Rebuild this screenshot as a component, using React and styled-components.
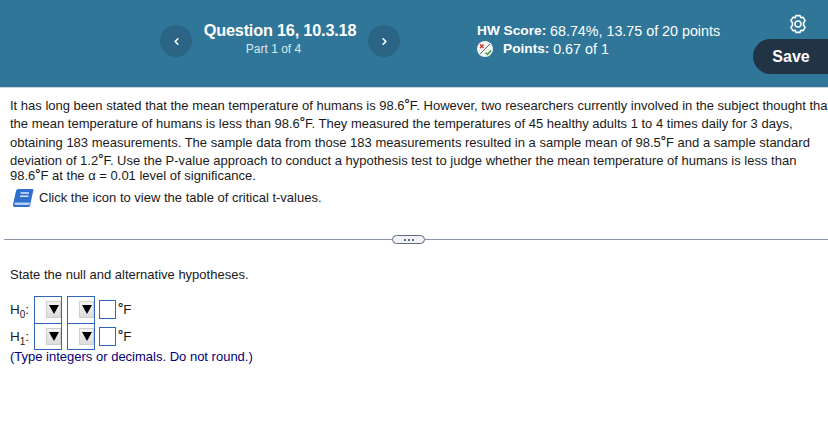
import React from "react";
import styled, { createGlobalStyle } from "styled-components";
import { ChevronLeft, ChevronRight } from "lucide-react";

const GlobalStyle = createGlobalStyle`
  html, body {
    margin: 0;
    padding: 0;
    background: #fff;
    overflow: hidden;
  }
  body {
    font-family: "Liberation Sans", Arial, sans-serif;
    color: #1a1a1a;
  }
`;

const Page = styled.div`
  width: 828px;
  height: 432px;
  overflow: hidden;
`;

const Header = styled.header`
  display: flex;
  height: 88px;
  box-sizing: border-box;
  padding: 14px 0 0 160px;
  background-color: #2f7699;
  border-bottom: 1px solid #c9d3da;
  color: #fff;
`;

const NavButton = styled.button`
  display: flex;
  align-items: center;
  justify-content: center;
  flex: none;
  width: 32px;
  height: 32px;
  margin-top: 11px;
  padding: 0;
  border: 0;
  border-radius: 50%;
  background-color: #2b6484;
  color: #fff;
`;

const QuestionInfo = styled.div`
  width: 176px;
  padding-top: 6px;
  text-align: center;
`;

const QuestionTitle = styled.div`
  font-size: 16.3px;
  font-weight: 700;
  line-height: 20px;
  letter-spacing: -0.2px;
`;

const PartLabel = styled.div`
  margin: 2px 13px 0 0;
  font-size: 12px;
  line-height: 15px;
  color: #dce8ee;
`;

const ScoreInfo = styled.div`
  width: 276px;
  margin-left: 77px;
  padding-top: 8px;
  font-size: 14.3px;
  line-height: 18px;

  b {
    font-size: 13.7px;
  }
`;

const ScoreRow = styled.div`
  display: flex;
  align-items: center;
  white-space: pre;
`;

const PointsIcon = styled.svg`
  width: 16px;
  height: 16px;
  margin-right: 10px;
`;

const Actions = styled.div`
  display: flex;
  flex-direction: column;
  width: 75px;
`;

const GearIcon = styled.svg`
  width: 20px;
  height: 20px;
  margin: 0 0 5px 35px;
`;

const SaveButton = styled.button`
  width: 75px;
  height: 35px;
  padding: 1px 0 0 1px;
  border: 0;
  border-radius: 18px 0 0 18px;
  background-color: #203446;
  color: #fff;
  font-family: inherit;
  font-size: 16px;
  font-weight: 700;
`;

const Question = styled.section`
  padding: 9px 0 0 10px;
  font-size: 13px;
  white-space: nowrap;
`;

const TextLine = styled.div`
  height: ${(p) => p.$height || 18.3}px;
  line-height: 18.3px;
`;

const Sup = styled.span`
  position: relative;
  top: -2px;
  font-size: 13px;
  font-weight: 700;
`;

const IconLine = styled.div`
  display: flex;
  align-items: center;
  gap: 5px;
  height: 20px;
  margin: 2px 0 0 2px;
`;

const Divider = styled.div`
  display: flex;
  align-items: center;
  height: 12px;
  margin: 26px 0 0 4px;
`;

const DividerLine = styled.div`
  flex: ${(p) => (p.$fixed ? "none" : 1)};
  width: ${(p) => (p.$fixed ? "388px" : "auto")};
  height: 1px;
  background-color: #8a94a3;
`;

const Pill = styled.div`
  display: flex;
  align-items: center;
  justify-content: center;
  gap: 2px;
  box-sizing: border-box;
  width: 33px;
  height: 9px;
  border: 1px solid #5f6b7c;
  border-radius: 5px;
  background-color: #f1f3f6;
`;

const Dot = styled.span`
  width: 2px;
  height: 2px;
  background-color: #5f6b7c;
`;

const Answer = styled.section`
  padding: 21px 0 0 10px;
  font-size: 13px;
`;

const Prompt = styled.div`
  line-height: 16px;
  margin-bottom: 14px;
`;

const HypothesisRow = styled.div`
  display: flex;
  align-items: center;
  height: 26.5px;
`;

const HLabel = styled.div`
  width: 24px;
  font-size: 13.5px;

  sub {
    font-size: 10px;
    line-height: 0;
  }
`;

const SelectBox = styled.div`
  display: flex;
  justify-content: flex-end;
  align-items: center;
  flex: none;
  box-sizing: border-box;
  width: 28px;
  height: 27.5px;
  margin-right: 5px;
  border: 1.3px solid #3366bb;
`;

const SelectArrow = styled.div`
  display: flex;
  align-items: center;
  justify-content: center;
  box-sizing: border-box;
  width: 15px;
  height: 17px;
  background: linear-gradient(#f4f4f4, #dcdcdc);
  border: 1px solid #cfcfcf;

  &::after {
    content: "";
    border-left: 5px solid transparent;
    border-right: 5px solid transparent;
    border-top: 9px solid #000;
  }
`;

const NumberBox = styled.div`
  flex: none;
  box-sizing: border-box;
  width: 17px;
  height: 19px;
  margin-left: -1px;
  border: 1.2px solid #3366bb;
`;

const Unit = styled.div`
  margin-left: 2px;
  font-size: 13.5px;
`;

const Hint = styled.div`
  margin-top: -1px;
  line-height: 15px;
  color: #00007a;
`;

const BookIcon = () => (
  <svg width="22" height="20" viewBox="0 0 22 20">
    <path d="M6.5 1h14c.6 0 1 .5.9 1.1L18 17.8c-.1.7-.6 1.2-1.3 1.2H3c-1.5 0-2.3-1.2-2-2.6L4 3C4.3 1.8 5.3 1 6.5 1z" fill="#2f6fd0" />
    <path d="M3.2 14.6h14.7l-.5 2.4H3.4c-1.1 0-1.2-2.4-.2-2.4z" fill="#b5cef2" />
    <path d="M8.6 5h8.4M8 8.2h8.4" stroke="#dbe7f8" strokeWidth="1.4" />
  </svg>
);

const rows = [{ id: 0 }, { id: 1 }];

const App = () => (
  <Page>
    <GlobalStyle />
    <Header>
      <NavButton>
        <ChevronLeft size={11} strokeWidth={3.5} />
      </NavButton>
      <QuestionInfo>
        <QuestionTitle>Question 16, 10.3.18</QuestionTitle>
        <PartLabel>Part 1 of 4</PartLabel>
      </QuestionInfo>
      <NavButton>
        <ChevronRight size={11} strokeWidth={3.5} />
      </NavButton>
      <ScoreInfo>
        <ScoreRow>
          <b>HW Score: </b>68.74%, 13.75 of 20 points
        </ScoreRow>
        <ScoreRow>
          <PointsIcon viewBox="0 0 16 16">
            <circle cx="8" cy="8" r="8" fill="#f3f3f3" />
            <path d="M3 3.5l3.5 3.5M6.5 3.5L3 7" stroke="#c0392b" strokeWidth="1.4" />
            <path d="M3 13L13 3" stroke="#555" strokeWidth="0.9" />
            <path d="M8.5 11.5l2 2 3.5-4" stroke="#3a9a3a" strokeWidth="1.5" fill="none" />
          </PointsIcon>
          <b>Points: </b>0.67 of 1
        </ScoreRow>
      </ScoreInfo>
      <Actions>
        <GearIcon viewBox="0 0 20 20" fill="none" stroke="#fff" strokeWidth="1.6" strokeLinejoin="round">
          <path d="M8 1.6H12L12.8 3.8L15.1 3.3L17.1 6.7L15.6 8.5V11.5L17.1 13.3L15.1 16.7L12.8 16.2L12 18.4H8L7.2 16.2L4.9 16.7L2.9 13.3L4.4 11.5V8.5L2.9 6.7L4.9 3.3L7.2 3.8Z" />
          <circle cx="10" cy="10" r="3" />
        </GearIcon>
        <SaveButton>Save</SaveButton>
      </Actions>
    </Header>
    <Question>
      <TextLine>
        It has long been stated that the mean temperature of humans is 98.6<Sup>°</Sup>F. However, two researchers currently involved in the subject thought that
      </TextLine>
      <TextLine>
        the mean temperature of humans is less than 98.6<Sup>°</Sup>F. They measured the temperatures of 45 healthy adults 1 to 4 times daily for 3 days,
      </TextLine>
      <TextLine>
        obtaining 183 measurements. The sample data from those 183 measurements resulted in a sample mean of 98.5<Sup>°</Sup>F and a sample standard
      </TextLine>
      <TextLine $height={15.5}>
        deviation of 1.2<Sup>°</Sup>F. Use the P-value approach to conduct a hypothesis test to judge whether the mean temperature of humans is less than
      </TextLine>
      <TextLine>
        98.6<Sup>°</Sup>F at the α = 0.01 level of significance.
      </TextLine>
      <IconLine>
        <BookIcon />
        Click the icon to view the table of critical t-values.
      </IconLine>
    </Question>
    <Divider>
      <DividerLine $fixed />
      <Pill>
        <Dot />
        <Dot />
        <Dot />
      </Pill>
      <DividerLine />
    </Divider>
    <Answer>
      <Prompt>State the null and alternative hypotheses.</Prompt>
      {rows.map((row) => (
        <HypothesisRow key={row.id}>
          <HLabel>
            H<sub>{row.id}</sub>:
          </HLabel>
          <SelectBox>
            <SelectArrow />
          </SelectBox>
          <SelectBox>
            <SelectArrow />
          </SelectBox>
          <NumberBox />
          <Unit>
            <Sup>°</Sup>F
          </Unit>
        </HypothesisRow>
      ))}
      <Hint>(Type integers or decimals. Do not round.)</Hint>
    </Answer>
  </Page>
);

export default App;
